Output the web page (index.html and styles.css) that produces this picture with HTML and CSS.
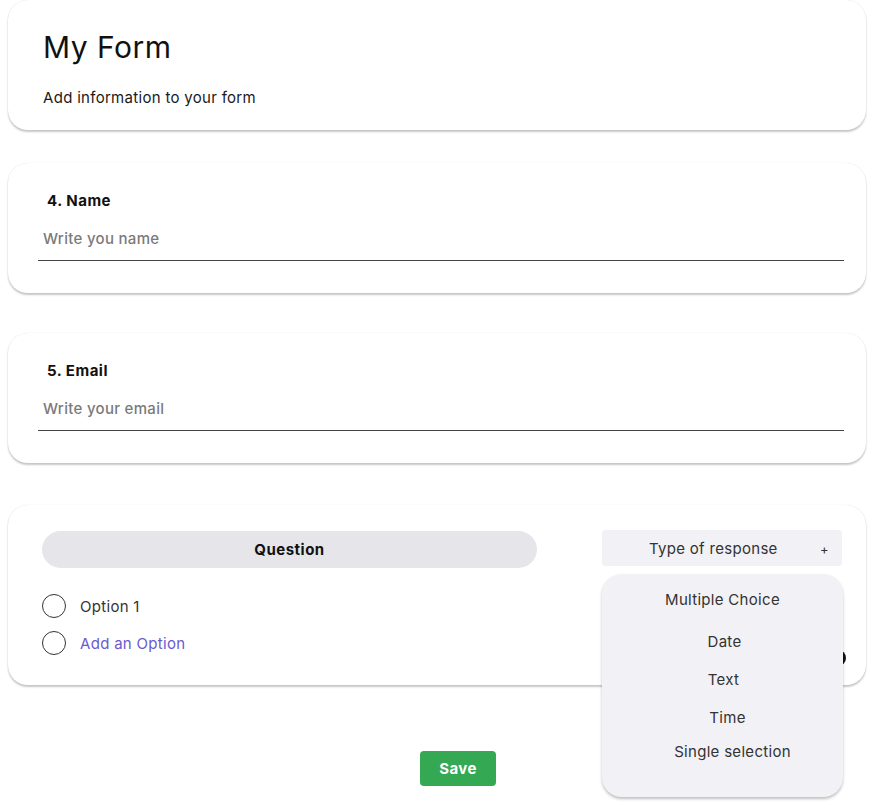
FILE: index.html
```html
<!DOCTYPE html>
<html lang="en">
<head>
<meta charset="utf-8">
<title>My Form</title>
<link rel="stylesheet" href="styles.css">
</head>
<body>
<main class="page">
  <section class="card card-header">
    <h1 class="form-title">My Form</h1>
    <p class="form-desc">Add information to your form</p>
  </section>

  <section class="card card-field">
    <label class="field-label">4. Name</label>
    <input class="field-input" type="text" placeholder="Write you name">
  </section>

  <section class="card card-field">
    <label class="field-label">5. Email</label>
    <input class="field-input" type="text" placeholder="Write your email">
  </section>

  <section class="card card-question">
    <div class="q-row">
      <div class="q-pill">Question</div>
      <div class="q-type"><span>Type of response</span><span class="q-plus">+</span></div>
    </div>
    <div class="opt"><span class="radio"></span><span class="opt-text">Option 1</span></div>
    <div class="opt"><span class="radio"></span><span class="opt-text opt-add">Add an Option</span></div>
    <span class="dot"></span>
    <ul class="menu">
      <li class="menu-item mi-1">Multiple Choice</li>
      <li class="menu-item mi-2">Date</li>
      <li class="menu-item mi-3">Text</li>
      <li class="menu-item mi-4">Time</li>
      <li class="menu-item mi-5">Single selection</li>
    </ul>
  </section>

  <div class="actions">
    <button class="save">Save</button>
  </div>
</main>
</body>
</html>
```

FILE: styles.css
```css
* { box-sizing: border-box; }
html, body { margin: 0; padding: 0; background: #fff; }
body {
  font-family: Inter, "Noto Sans", "Liberation Sans", sans-serif;
  color: #1a1a1a;
  width: 874px;
  height: 803px;
  overflow: hidden;
  letter-spacing: 0.3px;
}
.page {
  padding: 0 8px;
  display: flex;
  flex-direction: column;
}
.card {
  background: #fff;
  border-radius: 20px;
  box-shadow: 0 0 1px rgba(190, 150, 210, 0.45), 0 2px 2px rgba(0, 0, 0, 0.22);
}
.card-header {
  height: 130px;
  padding: 28px 35px 0;
}
.form-title {
  margin: 0;
  font-size: 30px;
  line-height: 38px;
  font-weight: 400;
  letter-spacing: 0.5px;
  color: #111;
}
.form-desc {
  margin: 22px 0 0;
  font-size: 15px;
  line-height: 20px;
  color: #1a1a1a;
}
.card-field {
  margin-top: 33px;
  height: 130px;
  padding: 28px 22px 0 30px;
  display: flex;
  flex-direction: column;
}
.card-field + .card-field { margin-top: 40px; }
.field-label {
  margin-left: 9px;
  font-size: 15px;
  line-height: 20px;
  font-weight: 700;
  letter-spacing: 0.5px;
  color: #111;
}
.field-input {
  display: block;
  width: 100%;
  margin-top: 17px;
  border: none;
  border-bottom: 1px solid #444;
  padding: 0 5px 12px;
  font-family: inherit;
  font-size: 15px;
  font-weight: 500;
  letter-spacing: 0.3px;
  line-height: 20px;
  height: 33px;
  outline: none;
  background: transparent;
  color: #333;
}
.field-input::placeholder { color: #7a7a7a; }
.card-question {
  position: relative;
  margin-top: 42px;
  height: 180px;
  padding: 25px 24px 0 34px;
}
.q-row {
  display: flex;
  justify-content: space-between;
  align-items: flex-start;
}
.q-pill {
  width: 495px;
  height: 37px;
  margin-top: 1px;
  border-radius: 19px;
  background: #e6e5ea;
  display: flex;
  align-items: center;
  justify-content: center;
  font-size: 15px;
  font-weight: 700;
  letter-spacing: 0.5px;
  color: #111;
}
.q-type {
  width: 240px;
  height: 36px;
  border-radius: 4px;
  background: #f2f1f6;
  display: flex;
  align-items: center;
  padding: 1px 13px 0 47px;
  font-size: 15px;
  color: #333;
}
.q-plus { margin-left: auto; font-size: 13px; }
.opt {
  display: flex;
  align-items: center;
  height: 28px;
  margin-top: 9px;
}
.q-row + .opt { margin-top: 24px; }
.radio {
  width: 24px;
  height: 24px;
  border: 1.5px solid #333;
  border-radius: 50%;
  flex: none;
}
.opt-text {
  margin-left: 14px;
  font-size: 15px;
  color: #333;
}
.opt-add { color: #6a5acd; }
.dot {
  position: absolute;
  right: 20px;
  top: 145px;
  width: 16px;
  height: 16px;
  border-radius: 50%;
  background: #111;
}
.menu {
  position: absolute;
  left: 594px;
  top: 69px;
  width: 241px;
  height: 223px;
  margin: 0;
  padding: 16px 0 0;
  list-style: none;
  background: #f2f1f6;
  border-radius: 20px;
  box-shadow: 0 2px 3px rgba(0, 0, 0, 0.25);
  z-index: 2;
}
.menu-item {
  text-align: center;
  font-size: 15px;
  line-height: 20px;
  color: #333;
}
.mi-1 { padding-left: 0; }
.mi-2 { margin-top: 22px; padding-left: 4px; }
.mi-3 { margin-top: 18px; padding-left: 2px; }
.mi-4 { margin-top: 18px; padding-left: 10px; }
.mi-5 { margin-top: 14px; padding-left: 20px; }
.actions {
  display: flex;
  padding-left: 412px;
  margin-top: 66px;
}
.save {
  width: 76px;
  height: 35px;
  border: none;
  border-radius: 4px;
  background: #34a853;
  color: #fff;
  font-family: inherit;
  font-size: 15px;
  font-weight: 700;
  letter-spacing: 0.4px;
}
```
